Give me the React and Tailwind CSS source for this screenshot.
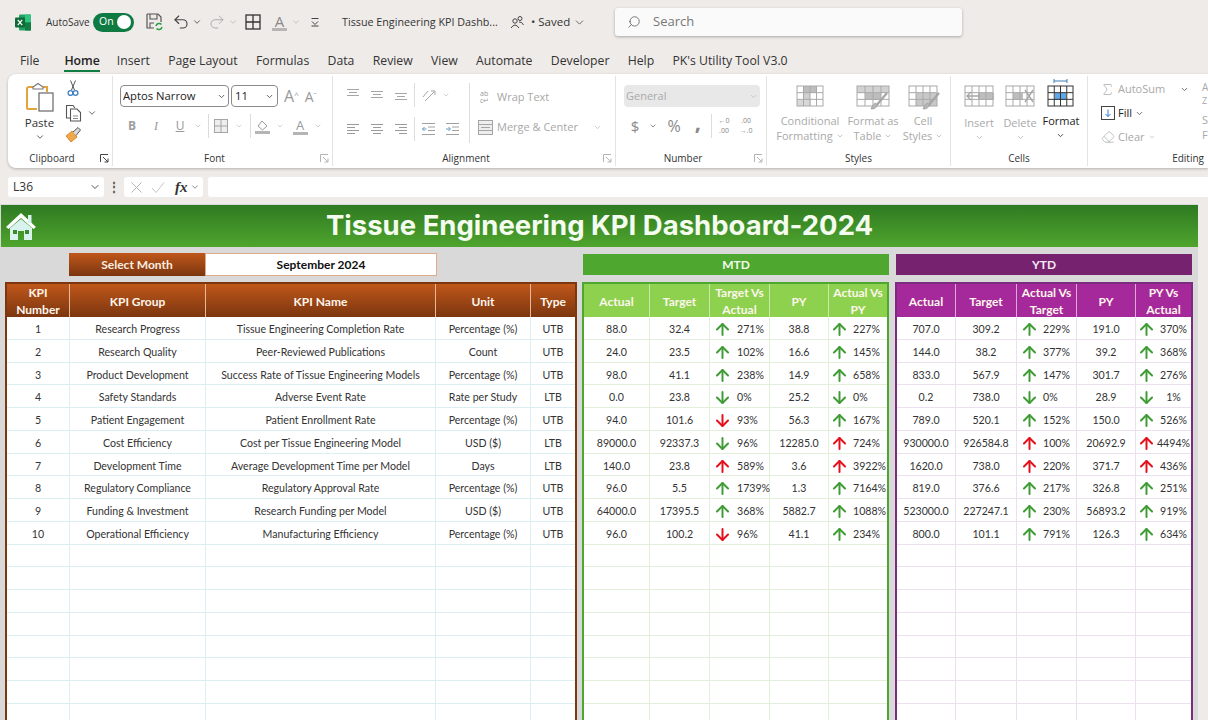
import { ArrowUp, ArrowDown, ChevronDown, Search, Undo2, Redo2, Sigma, Eraser } from 'lucide-react';

const kpis = [
    ['1', 'Research Progress', 'Tissue Engineering Completion Rate', 'Percentage (%)', 'UTB'],
    ['2', 'Research Quality', 'Peer-Reviewed Publications', 'Count', 'UTB'],
    ['3', 'Product Development', 'Success Rate of Tissue Engineering Models', 'Percentage (%)', 'UTB'],
    ['4', 'Safety Standards', 'Adverse Event Rate', 'Rate per Study', 'LTB'],
    ['5', 'Patient Engagement', 'Patient Enrollment Rate', 'Percentage (%)', 'UTB'],
    ['6', 'Cost Efficiency', 'Cost per Tissue Engineering Model', 'USD ($)', 'LTB'],
    ['7', 'Development Time', 'Average Development Time per Model', 'Days', 'LTB'],
    ['8', 'Regulatory Compliance', 'Regulatory Approval Rate', 'Percentage (%)', 'UTB'],
    ['9', 'Funding & Investment', 'Research Funding per Model', 'USD ($)', 'UTB'],
    ['10', 'Operational Efficiency', 'Manufacturing Efficiency', 'Percentage (%)', 'UTB'],
];

const mtd = [
    ['88.0', '32.4', 'ug', '271%', '38.8', 'ug', '227%'],
    ['24.0', '23.5', 'ug', '102%', '16.6', 'ug', '145%'],
    ['98.0', '41.1', 'ug', '238%', '14.9', 'ug', '658%'],
    ['0.0', '23.8', 'dg', '0%', '25.2', 'dg', '0%'],
    ['94.0', '101.6', 'dr', '93%', '56.3', 'ug', '167%'],
    ['89000.0', '92337.3', 'dg', '96%', '12285.0', 'ur', '724%'],
    ['140.0', '23.8', 'ur', '589%', '3.6', 'ur', '3922%'],
    ['96.0', '5.5', 'ug', '1739%', '1.3', 'ug', '7164%'],
    ['64000.0', '17395.5', 'ug', '368%', '5882.7', 'ug', '1088%'],
    ['96.0', '100.2', 'dr', '96%', '41.1', 'ug', '234%'],
];

const ytd = [
    ['707.0', '309.2', 'ug', '229%', '191.0', 'ug', '370%'],
    ['144.0', '38.2', 'ug', '377%', '39.2', 'ug', '368%'],
    ['833.0', '567.9', 'ug', '147%', '301.7', 'ug', '276%'],
    ['0.2', '738.0', 'dg', '0%', '28.9', 'dg', '1%'],
    ['789.0', '520.1', 'ug', '152%', '150.0', 'ug', '526%'],
    ['930000.0', '926584.8', 'ur', '100%', '20692.9', 'ur', '4494%'],
    ['1620.0', '738.0', 'ur', '220%', '371.7', 'ur', '436%'],
    ['819.0', '376.6', 'ug', '217%', '326.8', 'ug', '251%'],
    ['523000.0', '227247.1', 'ug', '230%', '56893.2', 'ug', '919%'],
    ['800.0', '101.1', 'ug', '791%', '126.3', 'ug', '634%'],
];

const blankRows = [0, 1, 2, 3, 4, 5, 6, 7];

function Chev({ className = 'text-[#555]', size = 10 }) {
    return <ChevronDown size={size} strokeWidth={2} className={className} />;
}

function Slot({ w, children }) {
    return <div className={`flex items-center justify-center shrink-0 h-full ${w}`}>{children}</div>;
}

function Sep({ h = 'h-[24px]' }) {
    return <div className={`w-px shrink-0 bg-[#dcdcdc] ${h}`} />;
}

function ExcelLogo() {
    return (
        <svg width="16" height="17" viewBox="0 0 16 17">
            <rect x="4" y="0.5" width="12" height="16" rx="1" fill="#21a366" />
            <rect x="10" y="0.5" width="6" height="8" fill="#33c481" />
            <rect x="10" y="8.5" width="6" height="8" fill="#107c41" />
            <rect x="0" y="3.5" width="10" height="10" rx="1" fill="#0e6b38" />
            <path d="M2.8 5.8 L7.2 11.2 M7.2 5.8 L2.8 11.2" stroke="#fff" strokeWidth="1.3" />
        </svg>
    );
}

function SaveIcon() {
    return (
        <svg width="17" height="18" viewBox="0 0 17 18" fill="none">
            <path d="M1 1 H12 L15 4 V9 M1 1 V15 H8" stroke="#555" strokeWidth="1.2" />
            <path d="M4 1 V6 H11 V1 M4 15 V10 H8" stroke="#555" strokeWidth="1.1" />
            <path d="M10 13 A3.2 3.2 0 0 1 15.5 11.5 M16 14 A3.2 3.2 0 0 1 10.5 15.5" stroke="#2f9e44" strokeWidth="1.5" />
        </svg>
    );
}

function GridIcon() {
    return (
        <svg width="16" height="16" viewBox="0 0 16 16" fill="none" stroke="#333" strokeWidth="1.3">
            <rect x="1" y="1" width="14" height="14" />
            <path d="M8 1 V15 M1 8 H15" />
        </svg>
    );
}

function ColorA({ size = 'text-[15px]', color = 'text-[#888]', bar = 'bg-[#b5b5b5]' }) {
    return (
        <div className="flex flex-col items-center leading-none">
            <span className={`${size} ${color} leading-[14px]`}>A</span>
            <div className={`w-[15px] h-[3px] ${bar}`} />
        </div>
    );
}

function Lines({ kind }) {
    const rows = {
        left: [[0, 12], [0, 8], [0, 12], [0, 8]],
        center: [[0, 12], [2, 8], [0, 12], [2, 8]],
        right: [[0, 12], [4, 8], [0, 12], [4, 8]],
    }[kind];
    return (
        <svg width="14" height="14" viewBox="0 0 14 14" stroke="#9a9a9a" strokeWidth="1">
            {rows.map(([x, w], i) => (
                <line key={i} x1={x + 1} x2={x + 1 + w} y1={2.5 + i * 3} y2={2.5 + i * 3} />
            ))}
        </svg>
    );
}

function TopAlign({ offset }) {
    return (
        <svg width="14" height="14" viewBox="0 0 14 14" stroke="#a5a5a5" strokeWidth="1">
            <line x1="1" x2="13" y1={2.5 + offset} y2={2.5 + offset} />
            <line x1="3" x2="11" y1={5.5 + offset} y2={5.5 + offset} />
            <line x1="1" x2="13" y1={8.5 + offset} y2={8.5 + offset} />
        </svg>
    );
}

function Indent({ flip }) {
    return (
        <svg width="15" height="14" viewBox="0 0 15 14" stroke="#a0a0a0" strokeWidth="1" fill="none">
            <path d="M1 1.5 H14 M7 5 H14 M7 8.5 H14 M1 12.5 H14" />
            <path d={flip ? 'M1 7 H5 M3.5 5 L5.5 7 L3.5 9' : 'M5.5 7 H1.5 M3.5 5 L1.5 7 L3.5 9'} stroke="#6a9bc4" />
        </svg>
    );
}

function PasteIcon() {
    return (
        <svg width="28" height="30" viewBox="0 0 28 30" fill="none">
            <path d="M3 5 H8 M16 5 H21 V10 M3 5 Q1 5 1 7 V26 Q1 27 3 27 H11" stroke="#e2a43c" strokeWidth="2" />
            <path d="M7 5 L12 1.5 L17 5 V7 H7 Z" fill="#fff" stroke="#777" strokeWidth="1.1" />
            <rect x="13" y="11" width="14" height="18" fill="#fff" stroke="#666" strokeWidth="1.2" />
        </svg>
    );
}

function ScissorsIcon() {
    return (
        <svg width="12" height="17" viewBox="0 0 12 17" fill="none">
            <path d="M3.5 0.5 L7.5 10 M8.5 0.5 L4.5 10" stroke="#555" strokeWidth="1" />
            <circle cx="3.5" cy="13" r="2.4" stroke="#3f7fc0" strokeWidth="1.3" />
            <circle cx="8.5" cy="13" r="2.4" stroke="#3f7fc0" strokeWidth="1.3" />
        </svg>
    );
}

function CopyIcon() {
    return (
        <svg width="17" height="18" viewBox="0 0 17 18" fill="none" stroke="#555" strokeWidth="1.1">
            <path d="M5 14 H1.5 V1.5 H8 L10 4" />
            <path d="M5.5 5 H12 L15.5 8.5 V17 H5.5 Z" fill="#fff" />
            <path d="M8 12 H13 M8 14.5 H13" stroke="#888" />
        </svg>
    );
}

function BrushIcon() {
    return (
        <svg width="17" height="17" viewBox="0 0 17 17" fill="none">
            <path d="M1 10 L7 5 L12 11 L6 16 Z" fill="#f0a94a" stroke="#c97a1c" strokeWidth="0.8" />
            <path d="M8 6 L13 1.5 L15.5 4 L11 9.5" fill="#d9d9d9" stroke="#555" strokeWidth="1" />
        </svg>
    );
}

function Launcher({ dark }) {
    const stroke = dark ? '#444' : '#b5b5b5';
    return (
        <svg width="9" height="9" viewBox="0 0 9 9" fill="none" stroke={stroke} strokeWidth="1">
            <path d="M0.5 8 V0.5 H8" />
            <path d="M3 3 L8 8 M8 4.5 V8 H4.5" />
        </svg>
    );
}

// grid glyphs for the big Styles and Cells buttons
function TableGlyph({ fills = [], line = '#a9a9a9', w = 34, h = 22, children }) {
    const xs = [0, 1, 2, 3, 4].map((i) => 1 + (i * (w - 2)) / 4);
    const ys = [0, 1, 2, 3].map((i) => 1 + (i * (h - 2)) / 3);
    return (
        <svg width={w} height={h} viewBox={`0 0 ${w} ${h}`} fill="none" className="overflow-visible">
            {fills.map(([x, y, fw, fh, c], i) => (
                <rect key={i} x={x} y={y} width={fw} height={fh} fill={c} />
            ))}
            <rect x="1" y="1" width={w - 2} height={h - 2} stroke={line} strokeWidth="1" />
            {xs.slice(1, 4).map((x) => (
                <line key={x} x1={x} x2={x} y1="1" y2={h - 1} stroke={line} />
            ))}
            {ys.slice(1, 3).map((y) => (
                <line key={y} x1="1" x2={w - 1} y1={y} y2={y} stroke={line} />
            ))}
            {children}
        </svg>
    );
}

function BrushOver() {
    return (
        <>
            <path d="M31 8 L19 22" stroke="#a5a5a5" strokeWidth="2.2" />
            <path d="M15 24 Q19 25 22 20 L19 18 Q16 20 15 24 Z" fill="#b5b5b5" stroke="#999" strokeWidth="0.6" />
        </>
    );
}

function BigButton({ w, lines, icon, dark, gap = 'mt-[6px]' }) {
    return (
        <Slot w={w}>
            <div className="flex flex-col items-center h-full pt-[9px]">
                <div className="h-[22px] flex items-center">{icon}</div>
                <div className={`${gap} flex flex-col items-center text-[11px] leading-[15px] whitespace-nowrap ${dark ? 'text-[#222]' : 'text-[#a9a9a9]'}`}>
                    {lines.map((l, i) => (
                        <div key={i} className="flex items-center gap-[3px]">
                            {l}
                            {i === lines.length - 1 && lines.length === 2 && <Chev size={8} className="text-[#aaa]" />}
                        </div>
                    ))}
                    {lines.length === 1 && (
                        <div className="h-[15px] flex items-center">
                            <Chev size={9} className={dark ? 'text-[#222]' : 'text-[#aaa]'} />
                        </div>
                    )}
                </div>
            </div>
        </Slot>
    );
}

function RibbonGroup({ w, label, launcher, labelClass = 'text-center', children, noBorder }) {
    return (
        <div className={`shrink-0 flex flex-col h-full ${w}`}>
            <div className={`h-[74px] ${noBorder ? '' : 'border-r border-[#e3e3e3]'}`}>{children}</div>
            <div className={`h-[16px] flex items-center ${noBorder ? '' : 'border-r border-[#e3e3e3]'}`}>
                <div className={`flex-1 text-[10px] text-[#333] ${labelClass}`}>{label}</div>
                {launcher && (
                    <div className="w-[16px] flex justify-center">
                        <Launcher dark={launcher === 'dark'} />
                    </div>
                )}
            </div>
        </div>
    );
}

function TopBar() {
    return (
        <div className="h-[44px] flex items-center pl-[15px] text-[#333]">
            <ExcelLogo />
            <span className="ml-[15px] w-[41px] text-[10px] whitespace-nowrap">AutoSave</span>
            <div className="ml-[6px] w-[41px] h-[19px] rounded-full bg-[#0f7b43] flex items-center justify-between pl-[6px] pr-[3px]">
                <span className="text-[10.5px] text-white">On</span>
                <div className="w-[14px] h-[14px] rounded-full bg-white" />
            </div>
            <div className="ml-[12px] flex"><SaveIcon /></div>
            <Undo2 size={18} strokeWidth={1.5} className="ml-[9px] text-[#444]" />
            <Chev className="ml-[2px] text-[#444]" />
            <Redo2 size={18} strokeWidth={1.3} className="ml-[6px] text-[#aaa]" />
            <Chev className="ml-[2px] text-[#bbb]" />
            <div className="ml-[7px] flex"><GridIcon /></div>
            <div className="ml-[11px]"><ColorA /></div>
            <Chev className="ml-[4px] text-[#bbb]" />
            <svg width="10" height="10" viewBox="0 0 10 10" fill="none" stroke="#444" className="ml-[9px]">
                <path d="M1.5 1.5 H8.5 M2 4.5 L5 7.5 L8 4.5 M1.5 9 H8.5" />
            </svg>
            <span className="ml-[22px] text-[10.75px] whitespace-nowrap w-[156px]">Tissue Engineering KPI Dashb...</span>
            <svg width="14" height="14" viewBox="0 0 14 14" fill="none" stroke="#444" className="ml-[12px]">
                <circle cx="5" cy="6" r="2.2" />
                <path d="M1 13 Q5 7 9 13" />
                <circle cx="10" cy="3.5" r="2" />
                <path d="M9 7 Q12 6.5 13.5 10" />
            </svg>
            <span className="ml-[7px] w-[39px] text-[11.5px] whitespace-nowrap">• Saved</span>
            <ChevronDown size={13} strokeWidth={1.4} className="ml-[3px] text-[#444]" />
            <div className="ml-[29px] w-[347px] h-[28px] rounded-[3px] bg-[#fbfafa] shadow-[0_1px_3px_rgba(0,0,0,0.3)] flex items-center pl-[12px]">
                <Search size={14} strokeWidth={1.3} className="text-[#555] -scale-x-100" />
                <span className="ml-[12px] text-[13px] text-[#777]">Search</span>
            </div>
        </div>
    );
}

function Tabs() {
    const tabs = ['Insert', 'Page Layout', 'Formulas', 'Data', 'Review', 'View', 'Automate', 'Developer', 'Help', "PK's Utility Tool V3.0"];
    return (
        <div className="h-[30px] flex items-start pl-[20px] pt-[7px] text-[12.25px] leading-[20px] text-[#333] whitespace-nowrap">
            <span>File</span>
            <div className="ml-[25px] font-semibold text-[#222]">
                Home
                <div className="h-[2px] mt-[-1px] bg-[#107c41]" />
            </div>
            <div className="ml-[17px] flex gap-[18.3px]">
                {tabs.map((t) => (
                    <span key={t}>{t}</span>
                ))}
            </div>
        </div>
    );
}

function Ribbon() {
    const dim = 'text-[#a8a8a8]';
    return (
        <div className="h-[94px] ml-[8px] pt-[2px] rounded-l-[8px] bg-white shadow-[0_1px_3px_rgba(0,0,0,0.25)] flex overflow-hidden">
            <RibbonGroup w="w-[105px]" label="Clipboard" launcher="dark">
                <div className="flex pl-[4px] h-full">
                    <div className="w-[53px] flex flex-col items-center pt-[6px] pl-[2px]">
                        <PasteIcon />
                        <span className="mt-[3px] text-[11.5px] text-[#333] leading-[15px]">Paste</span>
                        <Chev size={10} className="mt-[2px] text-[#444]" />
                    </div>
                    <div className="flex flex-col pt-[4px]">
                        <div className="pl-[2px]"><ScissorsIcon /></div>
                        <div className="mt-[7px] flex items-center">
                            <CopyIcon />
                            <Chev className="ml-[5px] text-[#444]" />
                        </div>
                        <div className="mt-[4px]"><BrushIcon /></div>
                    </div>
                </div>
            </RibbonGroup>

            <RibbonGroup w="w-[220px]" label="Font" launcher="light">
                <div className="flex items-center h-[22px] mt-[9px] pl-[7px]">
                    <div className="w-[109px] h-full rounded-[4px] border border-[#8a8a8a] flex items-center justify-between px-[2px] text-[11.25px] text-[#222]">
                        Aptos Narrow
                        <Chev size={9} className="text-[#333]" />
                    </div>
                    <div className="ml-[2px] w-[47px] h-full rounded-[4px] border border-[#8a8a8a] flex items-center justify-between px-[3px] text-[11.25px] text-[#222]">
                        11
                        <Chev size={9} className="text-[#333]" />
                    </div>
                    <span className="ml-[6px] text-[16px] text-[#999]">A<sup className="text-[8px]">^</sup></span>
                    <span className="ml-[6px] text-[14px] text-[#999]">A<sup className="text-[8px]">ˇ</sup></span>
                </div>
                <div className="flex items-center h-[24px] mt-[7px] pl-[7px] text-[12px] text-[#999]">
                    <Slot w="w-[24px]"><span className="font-bold text-[#a0a0a0]">B</span></Slot>
                    <Slot w="w-[24px]"><span className="italic [font-family:'Liberation_Serif',serif]">I</span></Slot>
                    <Slot w="w-[24px]"><span className="underline">U</span></Slot>
                    <Slot w="w-[12px]"><Chev size={8} className="text-[#bbb]" /></Slot>
                    <Slot w="w-[9px]"><Sep /></Slot>
                    <Slot w="w-[16px]">
                        <svg width="14" height="14" viewBox="0 0 14 14" fill="#eee" stroke="#a5a5a5"><rect x="0.5" y="0.5" width="13" height="13" /><path d="M7 0.5 V13.5 M0.5 7 H13.5" /></svg>
                    </Slot>
                    <Slot w="w-[20px]"><Chev size={8} className="text-[#bbb]" /></Slot>
                    <Slot w="w-[2px]"><Sep /></Slot>
                    <Slot w="w-[22px]">
                        <svg width="15" height="15" viewBox="0 0 15 15" fill="none" stroke="#999">
                            <path d="M7 2 L12 7 L7.5 11 L3 7 Z" />
                            <rect x="0" y="12" width="15" height="3" fill="#b5b5b5" stroke="none" />
                        </svg>
                    </Slot>
                    <Slot w="w-[14px]"><Chev size={8} className="text-[#bbb]" /></Slot>
                    <Slot w="w-[26px]"><ColorA size="text-[13px]" color="text-[#999]" /></Slot>
                    <Slot w="w-[10px]"><Chev size={8} className="text-[#bbb]" /></Slot>
                </div>
            </RibbonGroup>

            <RibbonGroup w="w-[283px]" label="Alignment" launcher="light">
                <div className="flex h-full pt-[7px]">
                    <div className="w-[136px] shrink-0">
                        <div className="flex h-[24px] pl-[8px]">
                            <Slot w="w-[24px]"><TopAlign offset={-1} /></Slot>
                            <Slot w="w-[24px]"><TopAlign offset={1} /></Slot>
                            <Slot w="w-[24px]"><TopAlign offset={3} /></Slot>
                            <Slot w="w-[2px]"><Sep /></Slot>
                            <Slot w="w-[26px]">
                                <svg width="15" height="15" viewBox="0 0 15 15" fill="none" stroke="#a5a5a5">
                                    <path d="M2 9 L7 3 M4 13 L13 4 M10 3 H14 V7" />
                                </svg>
                            </Slot>
                            <Slot w="w-[10px]"><Chev size={8} className="text-[#bbb]" /></Slot>
                        </div>
                        <div className="flex h-[24px] pl-[8px] mt-[10px]">
                            <Slot w="w-[24px]"><Lines kind="left" /></Slot>
                            <Slot w="w-[24px]"><Lines kind="center" /></Slot>
                            <Slot w="w-[24px]"><Lines kind="right" /></Slot>
                            <Slot w="w-[2px]"><Sep /></Slot>
                            <Slot w="w-[26px]"><Indent /></Slot>
                            <Slot w="w-[22px]"><Indent flip /></Slot>
                        </div>
                    </div>
                    <Sep h="h-[60px]" />
                    <div className={`pl-[10px] text-[11px] ${dim}`}>
                        <div className="flex items-center h-[24px] mt-[2px]">
                            <div className="w-[17px] shrink-0 text-[7px] leading-[7px] text-[#999]">
                                <div>ab</div>
                                <div>c↵</div>
                            </div>
                            <span>Wrap Text</span>
                        </div>
                        <div className="flex items-center h-[24px] mt-[6px] -ml-[2px]">
                            <svg width="15" height="15" viewBox="0 0 15 15" fill="#eee" stroke="#a5a5a5" className="mr-[4px] shrink-0">
                                <rect x="0.5" y="0.5" width="14" height="14" />
                                <path d="M0.5 4.5 H14.5 M0.5 10.5 H14.5 M3 7.5 H12" />
                            </svg>
                            <span className="w-[96px] whitespace-nowrap">Merge &amp; Center</span>
                            <Chev size={9} className="text-[#bbb]" />
                        </div>
                    </div>
                </div>
            </RibbonGroup>

            <RibbonGroup w="w-[151px]" label="Number" launcher="light">
                <div className="h-[22px] mt-[9px] mx-[8px] w-[136px] rounded-[4px] bg-[#e8e8e8] flex items-center justify-between px-[2px] text-[11px] text-[#aaa]">
                    General
                    <Chev size={9} className="text-[#bbb]" />
                </div>
                <div className="flex items-center h-[24px] mt-[7px] pl-[7px] text-[#888]">
                    <Slot w="w-[24px]"><span className="text-[15px]">$</span></Slot>
                    <Slot w="w-[12px]"><Chev size={8} className="text-[#555]" /></Slot>
                    <Slot w="w-[30px]"><span className="text-[16px]">%</span></Slot>
                    <Slot w="w-[18px]"><span className="text-[22px] font-bold leading-none -mt-[10px]">,</span></Slot>
                    <Slot w="w-[8px]"><Sep /></Slot>
                    <Slot w="w-[18px]"><span className="text-[7px] leading-[10px] text-center">←0<br />.00</span></Slot>
                    <Slot w="w-[26px]"><span className="text-[7px] leading-[10px] text-center">.00<br />→.0</span></Slot>
                </div>
            </RibbonGroup>

            <RibbonGroup w="w-[184px]" label="Styles">
                <div className="flex h-full pl-[5px]">
                    <BigButton
                        w="w-[76px]"
                        lines={['Conditional', 'Formatting']}
                        icon={<TableGlyph w={28} fills={[[8, 1, 12, 7, '#bdbdbd'], [8, 8, 6, 7, '#cfcfcf'], [1, 15, 14, 6, '#d8d8d8']]} />}
                    />
                    <BigButton
                        w="w-[50px]"
                        lines={['Format as', 'Table']}
                        icon={<TableGlyph w={34} fills={[[1, 1, 32, 7, '#d2d2d2'], [9, 8, 16, 7, '#bdbdbd']]}><BrushOver /></TableGlyph>}
                    />
                    <BigButton
                        w="w-[50px]"
                        lines={['Cell', 'Styles']}
                        icon={<TableGlyph w={30} fills={[[8, 8, 21, 13, '#c8c8c8']]}><BrushOver /></TableGlyph>}
                    />
                </div>
            </RibbonGroup>

            <RibbonGroup w="w-[137px]" label="Cells">
                <div className="flex h-full pl-[8px]">
                    <BigButton
                        w="w-[40px]"
                        lines={['Insert']}
                        gap="mt-[8px]"
                        icon={<TableGlyph w={30} fills={[[14, 8, 16, 7, '#bdbdbd']]}><path d="M16 11 H3 M7 7 L3 11 L7 15" stroke="#a5a5a5" strokeWidth="1.4" /></TableGlyph>}
                    />
                    <BigButton
                        w="w-[42px]"
                        lines={['Delete']}
                        gap="mt-[8px]"
                        icon={<TableGlyph w={30} fills={[[8, 8, 10, 7, '#bdbdbd']]}><path d="M20 5 L28 17 M28 5 L20 17" stroke="#a5a5a5" strokeWidth="1.4" /></TableGlyph>}
                    />
                    <BigButton
                        w="w-[40px]"
                        lines={['Format']}
                        dark
                        icon={
                            <TableGlyph w={27} line="#333" fills={[[8, 8, 11, 7, '#5ea9e8']]}>
                                <path d="M7 -4 H20 M7 -6 V-2 M20 -6 V-2" stroke="#3a7fb5" strokeWidth="1" />
                            </TableGlyph>
                        }
                    />
                </div>
            </RibbonGroup>

            <RibbonGroup w="w-[120px]" label="Editing" labelClass="text-right pr-[4px]" noBorder>
                <div className="flex h-full pt-[3px]">
                    <div className="w-[110px] shrink-0 text-[11px]">
                        <div className="flex items-center h-[20px] text-[#a8a8a8]">
                            <Slot w="w-[30px] pl-[9px]"><Sigma size={15} strokeWidth={1.2} /></Slot>
                            <span className="w-[62px]">AutoSum</span>
                            <Chev size={9} className="text-[#444]" />
                        </div>
                        <div className="flex items-center h-[20px] mt-[4px] text-[#222]">
                            <Slot w="w-[30px] pl-[9px]">
                                <svg width="14" height="14" viewBox="0 0 14 14" fill="none" stroke="#444">
                                    <rect x="0.5" y="0.5" width="13" height="13" />
                                    <path d="M7 3.5 V10.5 M4.5 8 L7 10.5 L9.5 8" stroke="#2b7cd3" />
                                </svg>
                            </Slot>
                            <span>Fill</span>
                            <Chev size={9} className="ml-[3px] text-[#444]" />
                        </div>
                        <div className="flex items-center h-[20px] mt-[4px] text-[#a8a8a8]">
                            <Slot w="w-[30px] pl-[9px]"><Eraser size={14} strokeWidth={1.2} /></Slot>
                            <span>Clear</span>
                            <Chev size={8} className="ml-[3px] text-[#bbb]" />
                        </div>
                    </div>
                    <div className="pl-[4px] flex flex-col items-start shrink-0 text-[11px] leading-[15px] text-[#a8a8a8] whitespace-nowrap">
                        <span className="text-[10px] leading-[14px] mt-px">A</span>
                        <span className="text-[9px] leading-[13px]">Z</span>
                        <span className="mt-[5px]">Sort &amp;</span>
                        <span>Filter</span>
                    </div>
                </div>
            </RibbonGroup>
        </div>
    );
}

function FormulaBar() {
    return (
        <div className="h-[20px] mt-[9px] flex items-stretch pl-[8px] text-[#333]">
            <div className="w-[96px] rounded-[3px] bg-white flex items-center justify-between pl-[5px] pr-[3px] text-[12px]">
                L36
                <Chev size={12} className="text-[#555]" />
            </div>
            <div className="w-[20px] flex items-center justify-center text-[12px] font-bold text-[#555]">⋮</div>
            <div className="w-[79px] rounded-[3px] bg-white flex items-center pl-[6px] text-[#bbb]">
                <svg width="13" height="13" viewBox="0 0 13 13" stroke="#b5b5b5" fill="none"><path d="M1.5 1.5 L11.5 11.5 M11.5 1.5 L1.5 11.5" /></svg>
                <svg width="14" height="13" viewBox="0 0 14 13" stroke="#c5c5c5" fill="none" className="ml-[8px]"><path d="M1 7 L5 11.5 L13 1.5" /></svg>
                <span className="ml-[10px] text-[15px] italic font-bold text-[#333] [font-family:'Liberation_Serif',serif]">fx</span>
                <Chev size={10} className="ml-[2px] text-[#777]" />
            </div>
            <div className="ml-[5px] w-[1000px] rounded-l-[3px] bg-white" />
        </div>
    );
}

function HomeIcon() {
    return (
        <svg width="32" height="28" viewBox="0 0 32 28">
            <path d="M16 1 L31 15 L28.5 17 L16 6 L3.5 17 L1 15 Z" fill="#fff" />
            <rect x="23" y="3" width="3.5" height="8" fill="#d8f3ee" />
            <path d="M5 16 L16 7 L27 16 V28 H19 V19 H13 V28 H5 Z" fill="#d8f3ee" />
            <rect x="8" y="18" width="4" height="4" fill="#3f8a2a" />
            <rect x="20" y="18" width="4" height="4" fill="#3f8a2a" />
        </svg>
    );
}

function Trend({ dir, value, slot, center }) {
    const color = dir[1] === 'r' ? 'text-[#e3101c]' : 'text-[#3f9c35]';
    const Icon = dir[0] === 'u' ? ArrowUp : ArrowDown;
    return (
        <div className="flex items-center h-full pt-[2px]">
            <div className={`flex items-center justify-center shrink-0 ${slot}`}>
                <Icon size={19} strokeWidth={2.5} className={`shrink-0 ${color}`} />
            </div>
            <span className={center ? 'flex-1 text-center whitespace-nowrap' : 'whitespace-nowrap'}>{value}</span>
        </div>
    );
}

function Panel({ cols, line, frame, head, dividers, headCells, rows, render }) {
    return (
        <div className={`border-x-2 ${frame} shrink-0`}>
            <div className={`grid h-[35px] border-t-2 ${cols} ${head} ${frame}`}>
                {headCells.map((h, i) => (
                    <div
                        key={i}
                        className={`flex items-center justify-center text-center text-[12px] leading-[17px] font-bold text-[#fdf6ec] ${i < headCells.length - 1 ? `border-r ${dividers}` : ''}`}
                    >
                        {h}
                    </div>
                ))}
            </div>
            {rows.map((r, ri) => (
                <div key={ri} className={`grid h-[22.78px] bg-white border-b ${cols} ${line}`}>
                    {r.map((c, i) => (
                        <div
                            key={i}
                            className={`h-full overflow-visible text-[10.6px] leading-[21px] text-[#333] ${i < r.length - 1 ? `border-r ${line}` : ''}`}
                        >
                            {render(c, i)}
                        </div>
                    ))}
                </div>
            ))}
            {blankRows.map((b) => (
                <div key={b} className={`grid h-[22.78px] bg-white border-b ${cols} ${line}`}>
                    {headCells.map((h, i) => (
                        <div key={i} className={`h-full ${i < headCells.length - 1 ? `border-r ${line}` : ''}`} />
                    ))}
                </div>
            ))}
        </div>
    );
}

function centerText(c) {
    return <div className="h-full pt-[2px] flex items-center justify-center whitespace-nowrap">{c}</div>;
}

function Sheet() {
    const mergeTrend = (r) => [r[0], r[1], [r[2], r[3]], r[4], [r[5], r[6]]];
    return (
        <div className="mt-[7px] w-[1198px] h-[516px] overflow-hidden bg-[#d9d9d9] pt-px [font-family:'Lato',sans-serif]">
            <div className="ml-px h-[42px] flex items-center bg-gradient-to-b from-[#2f7a22] to-[#4fa52d]">
                <div className="ml-[4px] w-[34px] flex"><HomeIcon /></div>
                <h1 className="ml-[287px] text-[27.5px] font-bold text-[#f4fbef] whitespace-nowrap [font-family:'Inter',sans-serif]">
                    Tissue Engineering KPI Dashboard-2024
                </h1>
            </div>

            <div className="mt-[6px] h-[23px] flex items-stretch">
                <div className="ml-[69px] w-[136px] flex items-center justify-center text-[12px] font-bold text-[#fbeee0] bg-gradient-to-b from-[#c0571a] to-[#7c3610]">
                    Select Month
                </div>
                <div className="w-[232px] flex items-center justify-center bg-white border border-[#e0a988] text-[12px] font-bold text-[#111]">
                    September 2024
                </div>
                <div className="ml-[146px] my-px w-[306px] flex items-center justify-center bg-[#4ea72e] text-[12px] font-bold text-[#f4fbef]">
                    MTD
                </div>
                <div className="ml-[7px] my-px w-[296px] flex items-center justify-center bg-[#76226f] text-[12px] font-bold text-[#f4e8f3]">
                    YTD
                </div>
            </div>

            <div className="mt-[6px] pl-[5px] flex">
                <Panel
                    cols="grid-cols-[63px_136px_230px_95px_44px]"
                    line="border-[#daeef3]"
                    frame="border-[#7c3610]"
                    head="bg-gradient-to-b from-[#c0571a] to-[#7c3610]"
                    dividers="border-[#e6b999]"
                    headCells={['KPI Number', 'KPI Group', 'KPI Name', 'Unit', 'Type']}
                    rows={kpis}
                    render={centerText}
                />
                <div className="w-[5px] shrink-0" />
                <Panel
                    cols="grid-cols-[66px_60px_60px_59px_58px]"
                    line="border-[#e2efda]"
                    frame="border-[#4ea72e]"
                    head="bg-[#8ed14f]"
                    dividers="border-[#c9e8ac]"
                    headCells={['Actual', 'Target', 'Target Vs Actual', 'PY', 'Actual Vs PY']}
                    rows={mtd.map(mergeTrend)}
                    render={(c, i) => {
                        if (i === 2) return <Trend dir={c[0]} value={c[1]} slot="w-[27px] pr-[2px]" />;
                        if (i === 4) return <Trend dir={c[0]} value={c[1]} slot="w-[24px] pr-[4px]" />;
                        return centerText(c);
                    }}
                />
                <div className="w-[6px] shrink-0" />
                <Panel
                    cols="grid-cols-[59px_61px_60px_59px_55px]"
                    line="border-[#ecdff0]"
                    frame="border-[#7b2c7f]"
                    head="bg-[#a6299b]"
                    dividers="border-[#dba9d6]"
                    headCells={['Actual', 'Target', 'Actual Vs Target', 'PY', 'PY Vs Actual']}
                    rows={ytd.map(mergeTrend)}
                    render={(c, i) => {
                        if (i === 2) return <Trend dir={c[0]} value={c[1]} slot="w-[26px] pr-[2px]" />;
                        if (i === 4) return <Trend dir={c[0]} value={c[1]} slot="w-[20px]" center />;
                        return centerText(c);
                    }}
                />
            </div>
        </div>
    );
}

export default function App() {
    return (
        <div className="w-[1208px] h-[720px] overflow-hidden bg-[#efebe9] [font-family:'Open_Sans',sans-serif]">
            <TopBar />
            <Tabs />
            <Ribbon />
            <FormulaBar />
            <Sheet />
        </div>
    );
}
